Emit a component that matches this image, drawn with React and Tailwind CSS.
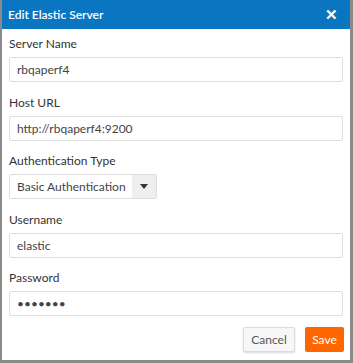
import React from "react";

const Field = ({ label, children }) => (
  <div className="flex flex-col">
    <label className="h-[18px] leading-[18px] text-[12px] text-[#333] mb-[4px]">{label}</label>
    {children}
  </div>
);

const TextInput = ({ value, type = "text" }) => (
  <input
    type={type}
    defaultValue={value}
    className="h-[25px] w-full border border-[#ddd] rounded-[2px] px-[7px] text-[12px] text-[#444] outline-none bg-white"
  />
);

export default function App() {
  return (
    <div
      className="w-[353px] h-[363px] bg-white flex flex-col border-l-2 border-r-[3px] border-b-[3px] border-[#8a8a8a] overflow-hidden"
      style={{ fontFamily: "Lato, 'Liberation Sans', sans-serif" }}
    >
      <div className="h-[29px] bg-[#0a76c2] flex items-center justify-between pl-[6px] pr-[12px] shrink-0">
        <span className="text-white text-[12px] font-semibold">Edit Elastic Server</span>
        <button className="text-white text-[15px] font-bold leading-none">✕</button>
      </div>
      <div className="flex flex-col gap-[11.5px] px-[7px] pt-[6px]">
        <Field label="Server Name">
          <TextInput value="rbqaperf4" />
        </Field>
        <Field label="Host URL">
          <TextInput value="http://rbqaperf4:9200" />
        </Field>
        <Field label="Authentication Type">
          <div className="flex h-[25px] w-[148px] border border-[#ddd] rounded-[2px]">
            <div className="flex-1 flex items-center pl-[7px] text-[12px] text-[#444] whitespace-nowrap">Basic Authentication</div>
            <div className="w-[24px] bg-[#eee] flex items-center justify-center">
              <svg width="8" height="5" viewBox="0 0 8 5">
                <path d="M0 0h8L4 5z" fill="#333" />
              </svg>
            </div>
          </div>
        </Field>
        <Field label="Username">
          <TextInput value="elastic" />
        </Field>
        <Field label="Password">
          <TextInput value="elastic" type="password" />
        </Field>
      </div>
      <div className="flex justify-end gap-[10px] px-[6px] mt-[11px]">
        <button className="h-[25px] w-[52px] bg-[#f7f7f7] border border-[#ddd] rounded-[2px] shadow-[0_1px_2px_rgba(0,0,0,0.15)] text-[12px] text-[#555]">Cancel</button>
        <button className="h-[25px] w-[39px] bg-[#ff6600] rounded-[2px] text-[12px] text-white">Save</button>
      </div>
    </div>
  );
}
